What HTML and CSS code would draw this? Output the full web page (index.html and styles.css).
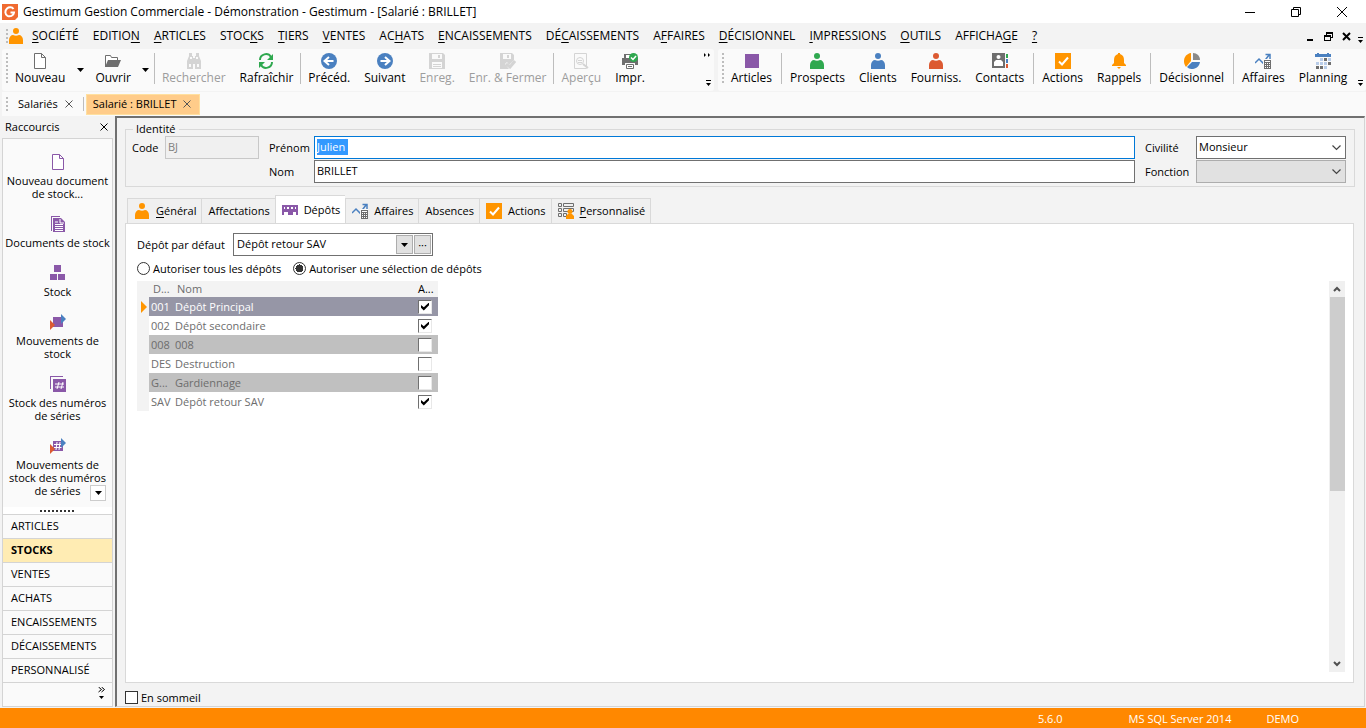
FILE: index.html
```html
<!doctype html>
<html lang="fr">
    <head>
        <meta charset="UTF-8" />
        <meta name="viewport" content="width=device-width, initial-scale=1.0" />
        <title>Gestimum Gestion Commerciale</title>
        <link rel="stylesheet" href="styles.css">
    </head>
    <body>
        <!-- shared icons -->
        <svg width="0" height="0" class="sprite" aria-hidden="true">
            <symbol id="person" viewBox="0 0 16 16">
                <circle cx="8" cy="3" r="3" />
                <path d="M1 16v-4c0-3 2-5 4-5 2 1 4 1 6 0 2 0 4 2 4 5v4z" />
            </symbol>
            <symbol id="page" viewBox="0 0 16 16">
                <path d="M2.500 .5h7l4 4v11h-11zM9.500 .5v4h4" fill="#fff" stroke="currentColor" />
            </symbol>
            <symbol id="disk" viewBox="0 0 16 16">
                <path d="M0 0h14l2 2v14H0zM3 1v5h10V1zM3 9v6h10V9z" fill-rule="evenodd" />
                <path d="M9 2h2v3H9zM4 11h8v1H4zM4 13h8v1H4z" />
            </symbol>
            <symbol id="check" viewBox="0 0 16 16">
                <path d="M0 0h16v16H0z" fill="#ff9500" />
                <path d="M4 8.500l3 3 6-7" fill="none" stroke="#fff" stroke-width="2" />
            </symbol>
            <symbol id="affaires" viewBox="0 0 16 16">
                <path d="M0 10l4-4 4 4 6-8M10.500 1.500H15V6" fill="none" stroke="#4a80c0" stroke-width="1.500" />
                <path d="M8 6h8v10H8z" fill="#fafafa" />
                <path d="M9 7h7v9H9z" fill="#6e6e6e" />
                <path d="M10 8h5v1h-5zM10 10h1v1h-1zM12 10h1v1h-1zM14 10h1v1h-1zM10 12h1v1h-1zM12 12h1v1h-1zM14 12h1v1h-1zM10 14h1v1h-1zM12 14h1v1h-1zM14 14h1v1h-1z" fill="#fff" />
            </symbol>
            <symbol id="depot" viewBox="0 0 16 16">
                <path d="M0 3h16v10h-2v-3h-3v3H6v-3H2v3H0z" />
                <path d="M2 5h1v2H2zM5 5h2v2H5zM9 5h2v2H9zM13 5h1v2h-1z" fill="#fff" />
            </symbol>
            <symbol id="cross" viewBox="0 0 8 8">
                <path d="M.5 .5l7 7M7.500 .5l-7 7" fill="none" stroke="currentColor" />
            </symbol>
            <symbol id="overflow" viewBox="0 0 5 6">
                <path d="M0 0h5v1H0zM0 3h5L2.500 6z" />
            </symbol>
            <symbol id="down" viewBox="0 0 7 4">
                <path d="M0 0h7L3.500 4z" />
            </symbol>
            <symbol id="arrow" viewBox="0 0 16 16">
                <circle cx="8" cy="8" r="8" fill="#4a80c0" />
                <path d="M3.500 8h9M8 4l4.500 4L8 12" fill="none" stroke="#fff" stroke-width="2" />
            </symbol>
        </svg>

        <header class="titlebar">
            <svg class="logo" viewBox="0 0 16 16">
                <path d="M0 0h16v13l-3 3H0z" fill="#f06a30" />
                <path d="M11.500 5C10 3 7 2.800 5 4.500c-2.500 2.300-2 6 .5 7.300 2.500 1.200 6 .2 6.500-3.300H8.500" fill="none" stroke="#fff" stroke-width="2" />
            </svg>
            <span>Gestimum Gestion Commerciale - Démonstration - Gestimum - [Salarié : BRILLET]</span>
            <div class="window-buttons">
                <button type="button" aria-label="Réduire"><svg viewBox="0 0 10 10"><path d="M0 5.500h10" /></svg></button>
                <button type="button" aria-label="Restaurer"><svg viewBox="0 0 10 10"><path d="M.5 2.500h7v7h-7zM2.500 2.500v-2h7v7h-2" /></svg></button>
                <button type="button" aria-label="Fermer"><svg viewBox="0 0 10 10"><path d="M0 0l10 10M10 0L0 10" /></svg></button>
            </div>
        </header>

        <nav class="menubar">
            <span class="grip"></span>
            <svg class="icon orange"><use href="#person" /></svg>
            <div class="menus">
                <a href="#"><u>S</u>OCIÉTÉ</a>
                <a href="#">EDITIO<u>N</u></a>
                <a href="#"><u>A</u>RTICLES</a>
                <a href="#">STOC<u>K</u>S</a>
                <a href="#"><u>T</u>IERS</a>
                <a href="#"><u>V</u>ENTES</a>
                <a href="#">AC<u>H</u>ATS</a>
                <a href="#"><u>E</u>NCAISSEMENTS</a>
                <a href="#">DÉ<u>C</u>AISSEMENTS</a>
                <a href="#">A<u>F</u>FAIRES</a>
                <a href="#"><u>D</u>ÉCISIONNEL</a>
                <a href="#"><u>I</u>MPRESSIONS</a>
                <a href="#"><u>O</u>UTILS</a>
                <a href="#">AFFICHA<u>G</u>E</a>
                <a href="#"><u>?</u></a>
            </div>
            <div class="mdi-buttons">
                <button type="button" aria-label="Réduire la fiche"><svg viewBox="0 0 9 9"><path d="M1 7h6v2H1z" /></svg></button>
                <button type="button" aria-label="Restaurer la fiche"><svg viewBox="0 0 9 9"><path d="M2 0h7v6H7V5h1V2H3v1H2zM0 3h7v6H0zM1 5v3h5V5z" fill-rule="evenodd" /></svg></button>
                <button type="button" aria-label="Fermer la fiche"><svg viewBox="0 0 9 9"><path d="M1 1l7 7M8 1L1 8" stroke="#000" stroke-width="2" /></svg></button>
            </div>
            <svg class="more"><use href="#overflow" /></svg>
        </nav>

        <div class="toolbars">
            <div class="toolbar standard">
                <span class="grip"></span>
                <button type="button" class="tool"><svg class="icon grey"><use href="#page" /></svg>Nouveau</button>
                <button type="button" class="drop" aria-label="Types de documents"><svg><use href="#down" /></svg></button>
                <button type="button" class="tool"><svg class="icon" viewBox="0 0 16 16"><path d="M.5 14V2.500h5l1 2h6V7" fill="#fff" stroke="#6e6e6e" /><path d="M3 7h13l-3 7H0z" fill="#6e6e6e" /></svg>Ouvrir</button>
                <button type="button" class="drop" aria-label="Fichiers récents"><svg><use href="#down" /></svg></button>
                <span class="sep"></span>
                <button type="button" class="tool" disabled><svg class="icon" viewBox="0 0 16 16"><path d="M3 0h3v3h1v2h2V3h1V0h3v3l2 5v8H9v-5H7v5H1V8l2-5z" /><path d="M4 4h2v2H4zM10 4h2v2h-2zM3 11h2v3H3zM11 11h2v3h-2z" fill="#fafafa" /></svg>Rechercher</button>
                <button type="button" class="tool"><svg class="icon" viewBox="0 0 16 16"><path d="M2 7c0-6 8-8 11-3M14 9c0 6-8 8-11 3" fill="none" stroke="#2fa84f" stroke-width="2" /><path d="M15 1v6H9zM1 15V9h6z" fill="#2fa84f" /></svg>Rafraîchir</button>
                <span class="sep"></span>
                <button type="button" class="tool"><svg class="icon flip"><use href="#arrow" /></svg>Précéd.</button>
                <button type="button" class="tool"><svg class="icon"><use href="#arrow" /></svg>Suivant</button>
                <button type="button" class="tool" disabled><svg class="icon"><use href="#disk" /></svg>Enreg.</button>
                <button type="button" class="tool" disabled><svg class="icon" viewBox="0 0 16 16"><path d="M0 0h12l2 2v5L9 12 7 9 5 11l4 5H0zM3 1v5h8V1z" fill-rule="evenodd" /><path d="M7 2h2v3H7z" /><path d="M6 11l4 3 5-6" fill="none" stroke="#d4d4d4" stroke-width="3" /></svg>Enr. &amp; Fermer</button>
                <span class="sep"></span>
                <button type="button" class="tool" disabled><svg class="icon" viewBox="0 0 16 16"><path d="M1.500 .5h12v15h-12z" fill="none" stroke="#d4d4d4" /><circle cx="7" cy="8" r="3.500" fill="none" stroke="#d4d4d4" /><path d="M5 7h4v1H5zM5 9h4v1H5z" /><path d="M10 11l5 4" stroke="#d4d4d4" stroke-width="2" /></svg>Aperçu</button>
                <button type="button" class="tool"><svg class="icon" viewBox="0 0 16 16"><path d="M2 1h9v4H2z" fill="#6e6e6e" /><path d="M4 2h6v3H4z" fill="#fff" /><path d="M0 5h16v7h-3v-2H3v2H0z" fill="#6e6e6e" /><path d="M4.500 11.500h7v4h-7zM6 13.500h4" fill="#fff" stroke="#6e6e6e" /><circle cx="11.500" cy="4.500" r="4.500" fill="#2fa84f" /><path d="M9 4.500l2 2 3-3.500" fill="none" stroke="#fff" stroke-width="1.500" /></svg>Impr.</button>
                <div class="bar-end">
                    <svg class="chevrons" viewBox="0 0 7 4"><path d="M0 0l2 2-2 2zM4 0l2 2-2 2z" /></svg>
                    <svg class="more"><use href="#overflow" /></svg>
                </div>
            </div>
            <div class="toolbar modules">
                <span class="grip"></span>
                <button type="button" class="tool"><svg class="icon purple" viewBox="0 0 16 16"><path d="M1 1h14v14H1z" /></svg>Articles</button>
                <span class="sep"></span>
                <button type="button" class="tool"><svg class="icon green"><use href="#person" /></svg>Prospects</button>
                <button type="button" class="tool"><svg class="icon blue"><use href="#person" /></svg>Clients</button>
                <button type="button" class="tool"><svg class="icon red"><use href="#person" /></svg>Fourniss.</button>
                <button type="button" class="tool"><svg class="icon" viewBox="0 0 16 16"><path d="M0 0h13v15H0z" fill="#6e6e6e" /><circle cx="6.500" cy="4" r="2" fill="#fff" /><path d="M2 13V9l2-2h5l2 2v4z" fill="#fff" /><path d="M14 1h2v4h-2z" fill="#2fa84f" /><path d="M14 6h2v4h-2z" fill="#4a80c0" /><path d="M14 11h2v4h-2z" fill="#dc5a32" /></svg>Contacts</button>
                <span class="sep"></span>
                <button type="button" class="tool"><svg class="icon"><use href="#check" /></svg>Actions</button>
                <button type="button" class="tool"><svg class="icon orange" viewBox="0 0 16 16"><path d="M7 0h2v1c3 1 4 3 4 6v3l2 2v1H1v-1l2-2V7c0-3 1-5 4-6zM6 14h4l-2 2z" /></svg>Rappels</button>
                <span class="sep"></span>
                <button type="button" class="tool"><svg class="icon" viewBox="0 0 16 16"><path d="M7 0v8l-5 6C-2 9 0 1 7 0z" fill="#ff9500" /><path d="M9 0c4 0 7 3 7 7H9z" fill="#8a8a8a" /><path d="M8 9h8c-1 7-9 9-13 5z" fill="#4a80c0" /></svg>Décisionnel</button>
                <span class="sep"></span>
                <button type="button" class="tool"><svg class="icon"><use href="#affaires" /></svg>Affaires</button>
                <button type="button" class="tool"><svg class="icon" viewBox="0 0 16 16"><path d="M0 1h2V0h2v1h8V0h2v1h2v3H0z" fill="#4a80c0" /><path d="M5 5h3v3H5zM13 5h3v3h-3zM1 9h3v3H1zM5 9h3v3H5zM9 9h3v3H9zM9 13h3v3H9zM13 9h3v3h-3z" fill="#b8cce8" /><path d="M9 5h3v3H9zM13 9h3v3h-3zM1 13h3v3H1zM5 13h3v3H5z" fill="#6e6e6e" /></svg>Planning</button>
                <div class="bar-end">
                    <svg class="more"><use href="#overflow" /></svg>
                </div>
            </div>
        </div>

        <nav class="documents">
            <span class="grip"></span>
            <a href="#" class="document">Salariés <svg><use href="#cross" /></svg></a>
            <span class="sep"></span>
            <a href="#" class="document active">Salarié : BRILLET <svg><use href="#cross" /></svg></a>
        </nav>

        <div class="workspace">
            <aside class="shortcuts">
                <div class="shortcuts-head">
                    <span>Raccourcis</span>
                    <button type="button" aria-label="Fermer les raccourcis"><svg><use href="#cross" /></svg></button>
                </div>
                <div class="shortcuts-box">
                    <div class="shortcut-list">
                        <a href="#"><svg class="icon purple"><use href="#page" /></svg>Nouveau document de stock...</a>
                        <a href="#"><svg class="icon purple" viewBox="0 0 16 16"><path d="M1 0h9v1H2v14H1zM3 2h8l4 4v10H3z" /><path d="M10 3v4h4M5 6h3M5 8.500h8M5 10.500h8M5 12.500h8M5 14.500h8" fill="none" stroke="#fff" /></svg>Documents de stock</a>
                        <a href="#"><svg class="icon purple" viewBox="0 0 16 16"><path d="M4 0h7v7H4zM0 9h7v6H0zM8 9h7v6H8z" /></svg>Stock</a>
                        <a href="#"><svg class="icon purple" viewBox="0 0 16 16"><path d="M3 3h10v10H3z" /><path d="M0 6l5 5-5 5z" fill="#dc5a32" /><path d="M11 0l5 5-5 5z" fill="#4a80c0" /></svg>Mouvements de stock</a>
                        <a href="#"><svg class="icon purple" viewBox="0 0 16 16"><path d="M0 0h13v1H1v12H0zM3 3h13v13H3z" /><path d="M5 8h9M5 11h9M9 6l-2 7M13 6l-2 7" stroke="#fff" /></svg>Stock des numéros de séries</a>
                        <a href="#"><svg class="icon purple" viewBox="0 0 16 16"><path d="M3 3h10v10H3z" /><path d="M4 6.500h8M4 9.500h8M7 4l-1 8M10 4l-1 8" stroke="#fff" /><path d="M0 6l5 5-5 5z" fill="#dc5a32" /><path d="M11 0l5 5-5 5z" fill="#4a80c0" /></svg>Mouvements de stock des numéros de séries</a>
                        <button type="button" class="scroll-down" aria-label="Suite des raccourcis"><svg><use href="#down" /></svg></button>
                    </div>
                    <div class="splitter"><span></span></div>
                    <nav class="sections">
                        <a href="#">ARTICLES</a>
                        <a href="#" class="active">STOCKS</a>
                        <a href="#">VENTES</a>
                        <a href="#">ACHATS</a>
                        <a href="#">ENCAISSEMENTS</a>
                        <a href="#">DÉCAISSEMENTS</a>
                        <a href="#">PERSONNALISÉ</a>
                    </nav>
                    <div class="sections-foot">
                        <button type="button" aria-label="Configurer"><svg viewBox="0 0 7 12"><path d="M.5 0l3 2.500-3 2.500M3.500 0l3 2.500-3 2.500" fill="none" stroke="#000" /><path d="M1 9h5l-2.500 3z" /></svg></button>
                    </div>
                </div>
            </aside>

            <main class="form">
                <fieldset class="identity">
                    <legend>Identité</legend>
                    <label for="code">Code</label>
                    <input type="text" id="code" value="BJ" disabled>
                    <label for="prenom" class="spaced">Prénom</label>
                    <div class="field focused">
                        <input type="text" id="prenom" value="Julien">
                    </div>
                    <label for="civilite" class="spaced">Civilité</label>
                    <select id="civilite"><option>Monsieur</option></select>
                    <label for="nom" class="spaced nom">Nom</label>
                    <input type="text" id="nom" value="BRILLET">
                    <label for="fonction" class="spaced">Fonction</label>
                    <select id="fonction" disabled><option></option></select>
                </fieldset>

                <div class="tabs" role="tablist">
                    <button type="button" role="tab"><svg class="icon orange"><use href="#person" /></svg><span><u>G</u>énéral</span></button>
                    <button type="button" role="tab">Affectations</button>
                    <button type="button" role="tab" class="active" aria-selected="true"><svg class="icon purple"><use href="#depot" /></svg>Dépôts</button>
                    <button type="button" role="tab"><svg class="icon"><use href="#affaires" /></svg>Affaires</button>
                    <button type="button" role="tab">Absences</button>
                    <button type="button" role="tab"><svg class="icon"><use href="#check" /></svg>Actions</button>
                    <button type="button" role="tab"><svg class="icon" viewBox="0 0 16 16"><path d="M.5 .5h3v3h-3zM5.500 .5h10v3h-10zM.5 5.500h3v3h-3zM5.500 5.500h10v3h-10zM.5 10.500h3v3h-3zM5.500 10.500h3v3h-3z" fill="none" stroke="#6e6e6e" /><circle cx="12" cy="8.500" r="2.500" fill="#ff9500" /><path d="M8 16v-3l2-2h4l2 2v3z" fill="#ff9500" /></svg><span><u>P</u>ersonnalisé</span></button>
                </div>

                <section class="panel">
                    <div class="default-depot">
                        <label for="depot-defaut">Dépôt par défaut</label>
                        <div class="combo">
                            <input type="text" id="depot-defaut" value="Dépôt retour SAV">
                            <button type="button" aria-label="Ouvrir la liste"><svg><use href="#down" /></svg></button>
                            <button type="button" aria-label="Parcourir">···</button>
                        </div>
                    </div>
                    <div class="choices">
                        <label><input type="radio" name="depots">Autoriser tous les dépôts</label>
                        <label><input type="radio" name="depots" checked>Autoriser une sélection de dépôts</label>
                    </div>
                    <div class="depot-list">
                        <table>
                            <thead>
                                <tr><th></th><th>D...</th><th>Nom</th><th class="allowed">A...</th></tr>
                            </thead>
                            <tbody>
                                <tr class="current"><td><svg viewBox="0 0 6 12"><path d="M0 0l6 6-6 6z" /></svg></td><td>001</td><td>Dépôt Principal</td><td><input type="checkbox" aria-label="Dépôt Principal" checked></td></tr>
                                <tr><td></td><td>002</td><td>Dépôt secondaire</td><td><input type="checkbox" aria-label="Dépôt secondaire" checked></td></tr>
                                <tr class="odd"><td></td><td>008</td><td>008</td><td><input type="checkbox" aria-label="008"></td></tr>
                                <tr><td></td><td>DES</td><td>Destruction</td><td><input type="checkbox" aria-label="Destruction"></td></tr>
                                <tr class="odd"><td></td><td>G...</td><td>Gardiennage</td><td><input type="checkbox" aria-label="Gardiennage"></td></tr>
                                <tr><td></td><td>SAV</td><td>Dépôt retour SAV</td><td><input type="checkbox" aria-label="Dépôt retour SAV" checked></td></tr>
                            </tbody>
                        </table>
                        <div class="scrollbar">
                            <svg viewBox="0 0 8 6"><path d="M1 5l3-3 3 3" /></svg>
                            <div class="track"><div class="thumb"></div></div>
                            <svg viewBox="0 0 8 6"><path d="M1 1l3 3 3-3" /></svg>
                        </div>
                    </div>
                </section>

                <label class="dormant"><input type="checkbox">En sommeil</label>
            </main>
        </div>

        <footer class="statusbar">
            <span>5.6.0</span>
            <span class="server">MS SQL Server 2014</span>
            <span>DEMO</span>
        </footer>
    </body>
</html>
```

FILE: styles.css
```css
* {
    box-sizing: border-box;
}

body {
    margin: 0;
    min-height: 100vh;
    display: flex;
    flex-direction: column;
    background: #f3f3f3;
    color: #000;
    font: 12px/16px 'Open Sans', 'Noto Sans', sans-serif;
}

button,
input,
select {
    font: inherit;
    color: inherit;
    margin: 0;
    padding: 0;
}

button {
    background: none;
    border: 0;
}

a {
    color: inherit;
    text-decoration: none;
}

svg {
    display: block;
    flex: none;
}

.sprite {
    position: absolute;
}

.icon {
    width: 16px;
    height: 16px;
}

.orange { color: #ff9500; fill: #ff9500; }
.purple { color: #8a58a8; fill: #8a58a8; }
.green { fill: #2fa84f; }
.blue { fill: #4a80c0; }
.red { fill: #dc5a32; }
.grey { color: #6e6e6e; }

.flip {
    transform: scaleX(-1);
}

.grip {
    flex: none;
    width: 2px;
    align-self: stretch;
    background: repeating-linear-gradient(#bdbdbd 0 2px, transparent 2px 4px);
}

.sep {
    flex: none;
    width: 1px;
    align-self: stretch;
    background: #bdbdbd;
}

.more {
    width: 5px;
    height: 6px;
}

/* title and menus */
.titlebar {
    display: flex;
    align-items: center;
    height: 23px;
    padding-left: 2px;
    gap: 5px;
    background: #fff;
}

.logo {
    width: 16px;
    height: 16px;
}

.window-buttons {
    display: flex;
    margin-left: auto;
}

.window-buttons button {
    width: 46px;
    height: 20px;
    padding: 0 17px;
}

.window-buttons svg {
    width: 10px;
    height: 10px;
    fill: none;
    stroke: #000;
}

.menubar {
    display: flex;
    align-items: center;
    height: 26px;
    padding-left: 6px;
}

.menubar .grip {
    height: 14px;
    align-self: center;
}

.menubar .more {
    margin: 8px 3px 0 7px;
}

.menus {
    display: flex;
    gap: 14px;
    margin-left: 8px;
}

u {
    text-underline-offset: 2px;
}

.mdi-buttons {
    display: flex;
    gap: 9px;
    margin-left: auto;
}

.mdi-buttons svg {
    width: 9px;
    height: 9px;
}

/* toolbars */
.toolbars {
    display: flex;
    gap: 4px;
    padding-left: 2px;
}

.toolbar {
    display: flex;
    height: 42px;
    padding: 4px 0 5px 4px;
    background: #fafafa;
    border-radius: 3px;
}

.toolbar .grip,
.toolbar .sep {
    height: 31px;
}

.standard {
    flex: 0 0 712px;
}

.modules {
    flex: 1;
}

.modules .sep {
    margin: 0 1px 0 2px;
}

.tool {
    display: flex;
    flex-direction: column;
    align-items: center;
    gap: 1px;
    padding: 0 7px;
    white-space: nowrap;
}

.tool:disabled {
    color: #9d9d9d;
    fill: #d4d4d4;
}

.drop {
    width: 16px;
}

.drop svg,
.scroll-down svg,
.combo svg {
    width: 7px;
    height: 4px;
    margin: auto;
}

.bar-end {
    display: flex;
    flex-direction: column;
    align-items: flex-end;
    margin: 0 3px 0 auto;
}

.bar-end .more {
    margin-top: auto;
}

.chevrons {
    width: 7px;
    height: 4px;
}

/* open documents */
.documents {
    display: flex;
    align-items: center;
    height: 25px;
    margin-left: 2px;
    padding-left: 4px;
    background: #fafafa;
    border-top: 1px solid #f3f3f3;
    font-size: 11px;
}

.documents .grip,
.documents .sep {
    align-self: center;
    height: 14px;
}

.document {
    display: flex;
    align-items: center;
    gap: 7px;
    height: 21px;
    padding: 0 10px;
}

.document svg {
    width: 8px;
    height: 8px;
    color: #555;
}

.document.active {
    margin-left: 2px;
    padding: 0 8px 0 6px;
    background: #ffcc8a;
    border: 1px solid #ffe0a0;
}

/* shortcuts panel */
.workspace {
    flex: 1;
    display: flex;
    font-size: 11px;
}

.shortcuts {
    flex: 0 0 113px;
    display: flex;
    flex-direction: column;
    padding: 0 0 1px 2px;
}

.shortcuts-head {
    display: flex;
    align-items: center;
    justify-content: space-between;
    height: 22px;
    padding: 0 5px 0 3px;
}

.shortcuts-head svg {
    width: 8px;
    height: 8px;
}

.shortcuts-box {
    flex: 1;
    display: flex;
    flex-direction: column;
    background: #fafafa;
    border: 1px solid #d4d4d4;
}

.shortcut-list {
    flex: 1;
    position: relative;
    display: flex;
    flex-direction: column;
    gap: 16px;
    padding-top: 15px;
    line-height: 13px;
    text-align: center;
}

.shortcut-list a {
    display: flex;
    flex-direction: column;
    align-items: center;
    gap: 4px;
}

.scroll-down {
    position: absolute;
    right: 6px;
    bottom: 6px;
    width: 16px;
    height: 16px;
    background: #fff;
    border: 1px solid #ccc;
}

.splitter {
    display: flex;
    justify-content: center;
    align-items: center;
    height: 7px;
    background: #fff;
}

.splitter span {
    width: 35px;
    height: 2px;
    background: repeating-linear-gradient(90deg, #333 0 2px, transparent 2px 4px);
}

.sections a {
    display: block;
    height: 24px;
    padding: 3px 8px;
    border-top: 1px solid #d4d4d4;
}

.sections .active {
    background: #ffecb3;
    font-weight: bold;
}

.sections-foot {
    height: 24px;
    padding: 4px 7px;
    border-top: 1px solid #d4d4d4;
    text-align: right;
}

.sections-foot svg {
    width: 7px;
    height: 12px;
}

/* employee form */
.form {
    flex: 1;
    min-width: 0;
    display: flex;
    flex-direction: column;
    margin: 0 1px 1px 2px;
    padding: 4px 9px 0 8px;
    border: 1px solid #d4d4d4;
    border-top: 2px solid #707070;
    border-left: 2px solid #707070;
}

.identity {
    display: grid;
    grid-template-columns: 28px 94px 45px 1fr 51px 150px;
    column-gap: 5px;
    row-gap: 1px;
    align-items: center;
    margin: 0;
    padding: 0 8px 3px 6px;
    border: 1px solid #d9d9d9;
}

.identity legend {
    height: 14px;
    line-height: 14px;
    padding: 0 3px;
    margin-left: 1px;
}

.identity label {
    white-space: nowrap;
}

.identity .spaced {
    margin-left: 5px;
}

.identity .nom {
    grid-column: 3;
}

.identity > input,
.identity select,
.field {
    width: 100%;
    height: 23px;
    padding: 0 2px 2px;
    background: #fff;
    border: 1px solid #707070;
    border-radius: 0;
}

.identity #code {
    background: #f0f0f0;
    border-color: #c8c8c8;
    color: #808080;
}

.identity select {
    appearance: none;
    background: #fff url("data:image/svg+xml,%3Csvg xmlns='http://www.w3.org/2000/svg' width='9' height='6'%3E%3Cpath d='M.5 .5l4 4 4-4' fill='none' stroke='%23444' stroke-width='1.2'/%3E%3C/svg%3E") no-repeat right 4px center;
}

.identity select:disabled {
    background-color: #e1e1e1;
    border-color: #adadad;
    opacity: 1;
}

.field.focused {
    border-color: #0078d7;
    padding: 2px;
}

/* selected text of the focused field */
.field input {
    display: block;
    width: 31px;
    height: 16px;
    border: 0;
    background: #3399ff;
    color: #fff;
}

.tabs {
    display: flex;
    align-items: flex-end;
    margin-top: 8px;
    padding-left: 2px;
}

.tabs button {
    display: flex;
    align-items: center;
    gap: 6px;
    height: 25px;
    padding: 0 5px 0 6px;
    background: #f0f0f0;
    border: 1px solid #d9d9d9;
    border-width: 1px 0 0 1px;
}

.tabs button:last-child {
    border-right-width: 1px;
}

.tabs .active {
    height: 29px;
    margin-bottom: -1px;
    padding-bottom: 1px;
    background: #fff;
}

.panel {
    flex: 1;
    display: flex;
    flex-direction: column;
    margin-right: 1px;
    padding: 9px 8px 10px 11px;
    background: #fff;
    border: 1px solid #d9d9d9;
}

.default-depot {
    display: flex;
    align-items: center;
}

.default-depot label {
    width: 96px;
    white-space: nowrap;
}

.combo {
    display: flex;
    align-items: center;
    gap: 1px;
    width: 200px;
    height: 23px;
    padding: 1px;
    border: 1px solid #707070;
}

.combo input {
    flex: 1;
    min-width: 0;
    border: 0;
    padding: 0 2px 2px;
}

.combo button {
    width: 17px;
    height: 19px;
    line-height: 14px;
    background: #e1e1e1;
    border: 1px solid #adadad;
}

.choices {
    display: flex;
    gap: 12px;
    height: 25px;
}

.choices label,
.dormant {
    display: flex;
    align-items: center;
    gap: 3px;
}

.choices input {
    appearance: none;
    width: 13px;
    height: 13px;
    border: 1px solid #333;
    border-radius: 50%;
    background: #fff;
}

.choices input:checked {
    background: radial-gradient(#333 0 4px, #fff 4px);
}

.depot-list {
    flex: 1;
    display: flex;
    justify-content: space-between;
    align-items: flex-start;
}

table {
    width: 301px;
    table-layout: fixed;
    border-collapse: collapse;
    color: #6d6d6d;
}

th {
    height: 16px;
    padding: 0 0 0 4px;
    line-height: 16px;
    background: #f3f3f3;
    font-weight: normal;
    text-align: left;
    white-space: nowrap;
}

th:nth-child(1) { width: 12px; }
th:nth-child(2) { width: 24px; }
th:nth-child(4) { width: 22px; }

th.allowed {
    padding: 0 2px;
    color: #000;
}

td {
    height: 19px;
    padding: 0 2px;
    line-height: 16px;
    white-space: nowrap;
}

td:first-child,
tr.current td:first-child,
tr.odd td:first-child {
    padding: 0 0 0 4px;
    background: #f3f3f3;
}

td svg {
    width: 6px;
    height: 12px;
    fill: #ff9500;
}

tr.current td {
    background: #9696a6;
    color: #fff;
}

tr.odd td {
    background: #c0c0c0;
}

td input {
    appearance: none;
    display: block;
    width: 14px;
    height: 14px;
    background: #fff;
    border: 1px solid #e8e8e8;
    border-top: 1px solid #707070;
    border-left: 1px solid #707070;
}

td input:checked::before {
    content: '';
    display: block;
    width: 8px;
    height: 8px;
    margin: 2px;
    background: #000;
    clip-path: polygon(0 30%, 35% 60%, 100% 0, 100% 35%, 35% 100%, 0 65%);
}

.scrollbar {
    align-self: stretch;
    display: flex;
    flex-direction: column;
    align-items: center;
    width: 16px;
    background: #f0f0f0;
}

.scrollbar svg {
    width: 8px;
    height: 6px;
    margin: 5px 0;
    fill: none;
    stroke: #505050;
    stroke-width: 2;
}

.track {
    flex: 1;
    width: 15px;
}

.thumb {
    height: 54%;
    background: #cdcdcd;
}

.dormant {
    height: 23px;
    padding-top: 6px;
    align-self: flex-start;
}

.dormant input {
    appearance: none;
    width: 13px;
    height: 13px;
    background: #fff;
    border: 1px solid #333;
}

.statusbar {
    display: flex;
    justify-content: flex-end;
    height: 20px;
    padding: 3px 67px 0 0;
    background: #ff8800;
    color: #fff;
    font-size: 11px;
}

.server {
    margin: 0 35px 0 66px;
}
```
